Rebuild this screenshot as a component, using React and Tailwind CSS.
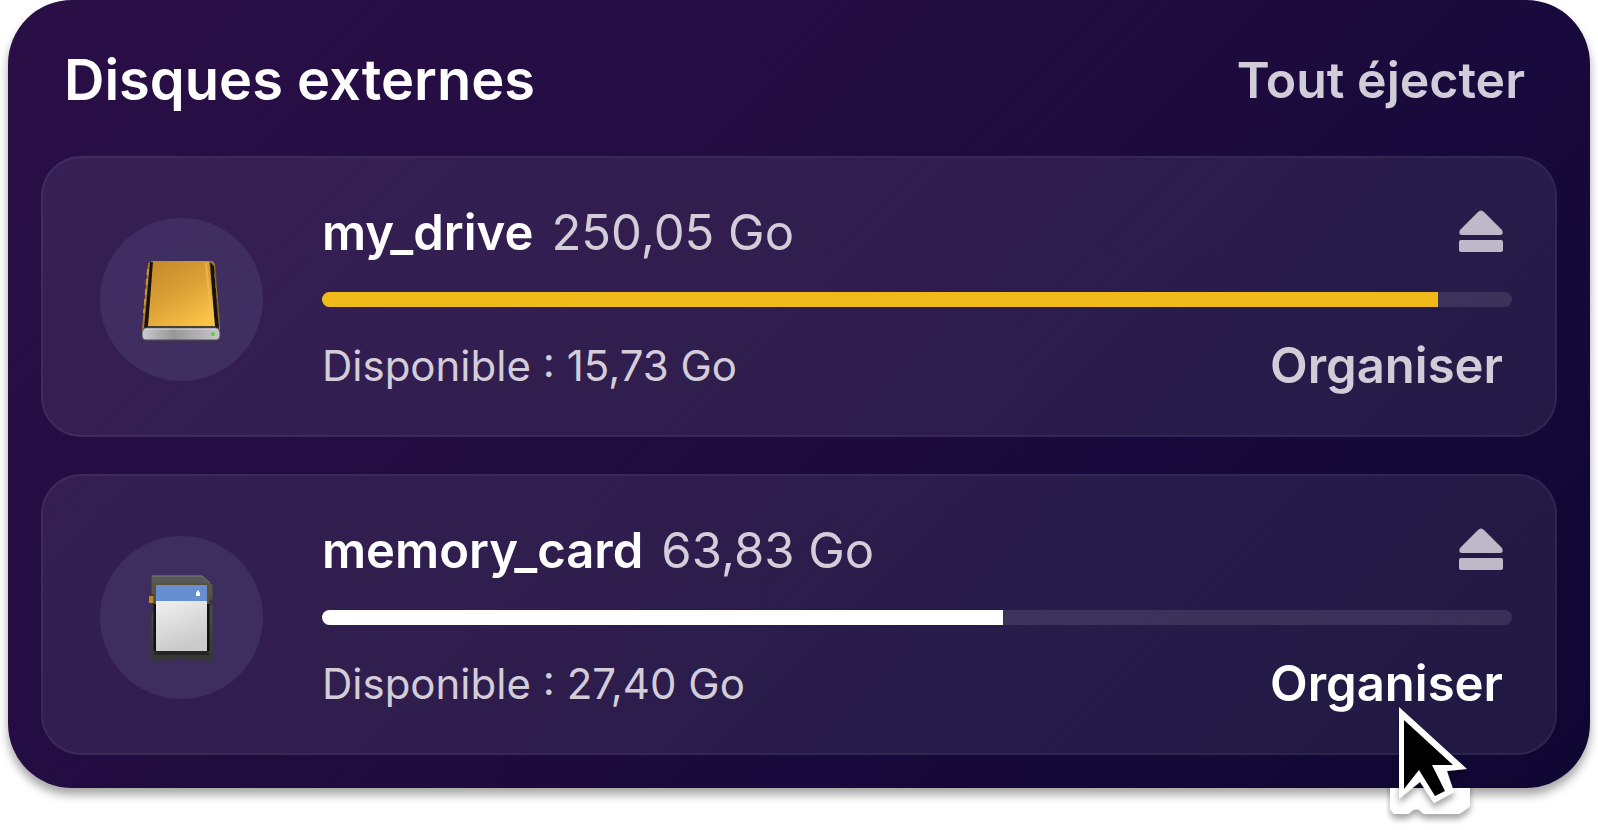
import { useState } from "react";

const disks = [
  { id: "my_drive", size: "250,05 Go", free: "15,73 Go", used: 93.8, color: "bg-[#f0ba1a]", icon: "drive" },
  { id: "memory_card", size: "63,83 Go", free: "27,40 Go", used: 57.2, color: "bg-white", icon: "card" },
];

function DriveIcon() {
  return (
    <svg viewBox="0 0 80 82" className="w-[80px] h-[82px]" aria-hidden="true">
      <defs>
        <linearGradient id="gold" x1="0.2" y1="0" x2="0.8" y2="1">
          <stop offset="0" stopColor="#c58c2b" />
          <stop offset="0.5" stopColor="#dda337" />
          <stop offset="1" stopColor="#fcc649" />
        </linearGradient>
        <linearGradient id="front" x1="0" y1="0" x2="1" y2="0">
          <stop offset="0" stopColor="#c9cbcf" />
          <stop offset="0.4" stopColor="#989698" />
          <stop offset="1" stopColor="#c8c6c8" />
        </linearGradient>
      </defs>
      <path d="M6 5 Q7 2 11 2 H69 Q72 2 73 6 L78 70 V75 Q78 81 73 81 H5 Q0 81 0 75 V70 Z" fill="#a87a2a" />
      <path d="M8 3 L12 3 L6 70 H2 Z" fill="#15110c" />
      <path d="M68 3 L72 7 L77 70 H73 Z" fill="#15110c" />
      <path d="M6 10 L2 54" stroke="#c99531" strokeWidth="2" strokeDasharray="6 4" />
      <path d="M73 14 L77 60" stroke="#7d5d22" strokeWidth="2" strokeDasharray="5 5" />
      <path d="M11 2 H67 L73 68 H6 Z" fill="url(#gold)" />
      <path d="M64 4 L70 67" stroke="#f0bf55" strokeWidth="2" opacity="0.7" />
      <path d="M2 69 H76 L78 73 V76 Q78 81 74 81 H4 Q0 81 0 76 V73 Z" fill="url(#front)" stroke="#514d4e" strokeWidth="1" />
      <path d="M5 68 H74" stroke="#474132" strokeWidth="2" />
      <path d="M4 70 H74" stroke="#dddddf" strokeWidth="1" />
      <circle cx="71" cy="75" r="2" fill="#55d048" />
    </svg>
  );
}

function CardIcon() {
  return (
    <svg viewBox="1 3 66 86" className="w-[66px] h-[86px]" aria-hidden="true">
      <defs>
        <linearGradient id="paper" x1="0" y1="0" x2="0.3" y2="1">
          <stop offset="0" stopColor="#fafafa" />
          <stop offset="1" stopColor="#cbcbcb" />
        </linearGradient>
        <linearGradient id="shell" x1="0" y1="0" x2="0" y2="1">
          <stop offset="0" stopColor="#5b5b5b" />
          <stop offset="1" stopColor="#363637" />
        </linearGradient>
      </defs>
      <rect x="1" y="24" width="5" height="7" fill="#b08a2d" />
      <path d="M3 3 H54 L65 13 V28 H62 V33 H65 V88 H38 L36 86 H29 L27 88 H3 V41 H5 V31 H6 V23 H3 Z" fill="url(#shell)" stroke="#383739" strokeWidth="1" />
      <path d="M4 4 H54 L62 11" stroke="#777676" strokeWidth="1" fill="none" />
      <path d="M7 32 V79 M60 32 V79" stroke="#111" strokeWidth="3" />
      <path d="M7 12 V32 M60 12 V32 M7 12 H60" stroke="#5f5131" strokeWidth="2" fill="none" />
      <path d="M7 79 H60 L62 83 H5 Z" fill="#252526" />
      <rect x="8" y="13" width="51" height="66" fill="url(#paper)" />
      <rect x="8" y="13" width="51" height="16" fill="#668ed0" />
      <path d="M48 21 L50 18 L52 21 V24 H48 Z" fill="#fff" />
    </svg>
  );
}

function EjectIcon() {
  return (
    <svg viewBox="0 0 44 46" className="w-[44px] h-[46px]" fill="currentColor" aria-hidden="true">
      <path d="M19 2 Q22 -1 25 2 L43 20 Q45 25 41 25 H3 Q-1 25 1 20 Z" />
      <rect x="0" y="30" width="44" height="12" rx="2" />
    </svg>
  );
}

function Pointer() {
  return (
    <svg
      viewBox="0 0 90 130"
      className="absolute right-[114px] -bottom-[42px] w-[90px] h-[130px] pointer-events-none"
      aria-hidden="true"
    >
      <defs>
        <filter id="pointerShadow" x="-30%" y="-50%" width="160%" height="220%">
          <feDropShadow dx="0" dy="5" stdDeviation="3" floodColor="#000" floodOpacity="0.35" />
        </filter>
        <clipPath id="belowPanel">
          <rect x="0" y="88" width="90" height="42" />
        </clipPath>
      </defs>
      <g clipPath="url(#belowPanel)">
        <path d="M4 80 H84 V106 L79 110 L73 114 H38 L32 109 L27 110 L22 114 H8 L4 109 Z" fill="#fff" filter="url(#pointerShadow)" />
      </g>
      <g filter="url(#pointerShadow)">
        <path d="M13 7 L81 69 L61 71 L68 92 L48 103 L34 82 L13 99 Z" fill="#fff" />
      </g>
      <path d="M18 20 L67 65 H46 L59 91 L49 96 L33 70 L18 89 Z" fill="#000" />
    </svg>
  );
}

function DiskCard({ disk, active, onEject }) {
  return (
    <li className="flex items-center gap-[59px] rounded-[40px] border-2 border-white/5 bg-[#e6eeff]/8 pt-[46px] pb-[40px] pl-[57px] pr-[43px]">
      <div className="flex size-[163px] shrink-0 items-center justify-center rounded-full bg-[#6c6ca0]/20">
        {disk.icon === "drive" ? <DriveIcon /> : <CardIcon />}
      </div>

      <div className="flex-1">
        <div className="flex h-[58px] items-center justify-between pr-[9px]">
          <div className="flex items-baseline gap-[18px] text-[49px] leading-[58px]">
            <h2 className="font-semibold text-white">{disk.id}</h2>
            <span className="text-[#d3cdd9]">{disk.size}</span>
          </div>
          <button type="button" aria-label={`Éjecter ${disk.id}`} onClick={onEject} className="text-[#bdb9c8]">
            <EjectIcon />
          </button>
        </div>

        <div className="my-[30px] h-[15px] overflow-hidden rounded-full bg-white/10">
          <div className={`h-full ${disk.color}`} style={{ width: `${disk.used}%` }} />
        </div>

        <div className="flex items-center justify-between pr-[9px]">
          <p className="text-[42px] leading-[58px] text-[#d3cdd9]">Disponible : {disk.free}</p>
          <button
            type="button"
            className={`text-[49px] leading-[58px] font-semibold hover:text-white ${
              active ? "text-white" : "text-[#d0ccd8]"
            }`}
          >
            Organiser
          </button>
        </div>
      </div>
    </li>
  );
}

function App() {
  const [list, setList] = useState(disks);

  const eject = (id) => setList(list.filter((d) => d.id !== id));

  return (
    <div className="min-h-screen bg-white px-2 pb-[42px] font-['Inter','Liberation_Sans',sans-serif]">
      <main className="relative rounded-[64px] bg-linear-[135deg,#2a0f47_0%,#230d42_33%,#1f0b3d_52%,#180a3c_66%,#130837_84%,#0f0632_100%] px-[33px] pb-[33px] shadow-[0_7px_10px_rgba(0,0,0,0.35)]">
        <header className="flex items-center justify-between pt-[47px] pb-[43px] pl-[23px] pr-[32px]">
          <h1 className="text-[56px] leading-[66px] font-semibold text-white">Disques externes</h1>
          <button
            type="button"
            onClick={() => setList([])}
            className="text-[50px] leading-[66px] font-semibold text-[#d0ccd8]"
          >
            Tout éjecter
          </button>
        </header>

        <ul className="flex flex-col gap-[37px]">
          {list.map((disk) => (
            <DiskCard key={disk.id} disk={disk} active={disk.id === "memory_card"} onEject={() => eject(disk.id)} />
          ))}
        </ul>

        <Pointer />
      </main>
    </div>
  );
}

export default App;
